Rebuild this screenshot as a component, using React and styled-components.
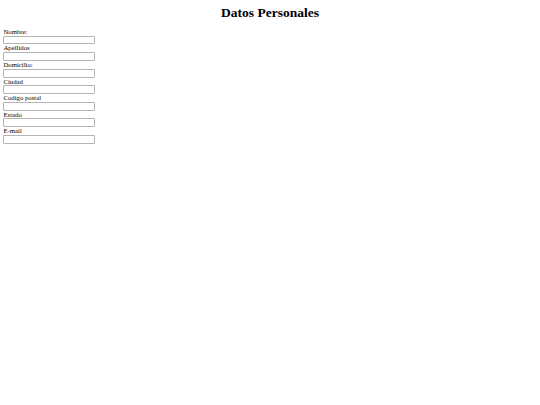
import styled, { createGlobalStyle } from "styled-components";

const GlobalStyle = createGlobalStyle`
  body {
    margin: 0;
    background: #ffffff;
    font-family: "Liberation Serif", "Times New Roman", serif;
    color: #000000;
  }
`;

const FIELDS = [
  "Nombre:",
  "Apellidos",
  "Domicilio:",
  "Ciudad",
  "Codigo postal",
  "Estado",
  "E-mail",
];

export default function App() {
  return (
    <>
      <GlobalStyle />
      <Page>
        <Title>Datos Personales</Title>
        <Form>
          {FIELDS.map((label) => (
            <Field key={label}>
              <Label>{label}</Label>
              <Input type="text" />
            </Field>
          ))}
        </Form>
      </Page>
    </>
  );
}

const Page = styled.div`
  padding: 0 3.4px;
`;

const Title = styled.h1`
  margin: 4.5px 0 7.9px;
  text-align: center;
  font-size: 13.5px;
  font-weight: bold;
  line-height: 15.5px;
`;

const Form = styled.form`
  display: flex;
  flex-direction: column;
  align-items: flex-start;
`;

const Field = styled.div`
  display: flex;
  flex-direction: column;
  align-items: flex-start;
`;

const Label = styled.label`
  font-size: 6.75px;
  line-height: 7.76px;
`;

const Input = styled.input`
  box-sizing: border-box;
  width: 92px;
  height: 8.8px;
  margin: 0;
  padding: 0;
  border: 1px solid #b4b4b4;
  border-radius: 1px;
  background: #ffffff;
  outline: none;
`;
